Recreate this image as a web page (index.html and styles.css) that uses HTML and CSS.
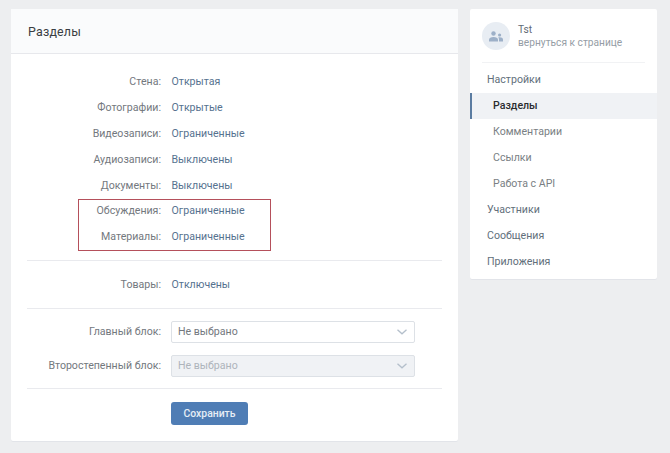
FILE: index.html
```html
<!DOCTYPE html>
<html lang="ru">
<head>
  <meta charset="UTF-8" />
  <title>Разделы</title>
  <link rel="stylesheet" href="styles.css">
</head>
<body>
  <div class="layout">
    <div class="panel main">
      <div class="panel-head">Разделы</div>
      <div class="panel-body">
        <div class="rows">
          <div class="row"><span class="label">Стена:</span><a class="value">Открытая</a></div>
          <div class="row"><span class="label">Фотографии:</span><a class="value">Открытые</a></div>
          <div class="row"><span class="label">Видеозаписи:</span><a class="value">Ограниченные</a></div>
          <div class="row"><span class="label">Аудиозаписи:</span><a class="value">Выключены</a></div>
          <div class="row"><span class="label">Документы:</span><a class="value">Выключены</a></div>
          <div class="row"><span class="label">Обсуждения:</span><a class="value">Ограниченные</a></div>
          <div class="row"><span class="label">Материалы:</span><a class="value">Ограниченные</a></div>
          <div class="highlight"></div>
        </div>
        <div class="sep"></div>
        <div class="row"><span class="label">Товары:</span><a class="value">Отключены</a></div>
        <div class="sep sep-goods"></div>
        <div class="selects">
          <div class="row-select">
            <span class="label">Главный блок:</span>
            <div class="select">Не выбрано
              <svg class="chevron" width="10" height="6" viewBox="0 0 10 6"><path d="M.5.8L5 4.800 9.500.8" fill="none" stroke="#b4bfcb" stroke-width="1.300"/></svg>
            </div>
          </div>
          <div class="row-select">
            <span class="label">Второстепенный блок:</span>
            <div class="select disabled">Не выбрано
              <svg class="chevron" width="10" height="6" viewBox="0 0 10 6"><path d="M.5.8L5 4.800 9.500.8" fill="none" stroke="#b4bfcb" stroke-width="1.300"/></svg>
            </div>
          </div>
        </div>
        <div class="sep sep-save"></div>
        <div class="actions"><button class="save-btn" type="button">Сохранить</button></div>
      </div>
    </div>
    <div class="panel side">
      <div class="owner">
        <div class="avatar">
          <svg width="14" height="11" viewBox="0 0 14 11"><circle cx="4.500" cy="2.500" r="2.200" fill="#9db0c8"/><path d="M0 10.500V8.600C0 7 2 6 4.500 6S9 7 9 8.600v1.900z" fill="#9db0c8"/><circle cx="10.600" cy="4" r="1.600" fill="#9db0c8"/><path d="M10 10.500V8.400c0-.8-.3-1.400-.8-1.800.4-.2.9-.3 1.400-.3 1.900 0 3.400.9 3.400 2.200v2z" fill="#9db0c8"/></svg>
        </div>
        <div class="owner-text">
          <div class="owner-name">Tst</div>
          <div class="owner-back">вернуться к странице</div>
        </div>
      </div>
      <div class="side-sep"></div>
      <div class="menu">
        <div class="menu-item">Настройки</div>
        <div class="menu-item sub active">Разделы</div>
        <div class="menu-item sub">Комментарии</div>
        <div class="menu-item sub">Ссылки</div>
        <div class="menu-item sub">Работа с API</div>
        <div class="menu-item">Участники</div>
        <div class="menu-item">Сообщения</div>
        <div class="menu-item">Приложения</div>
      </div>
    </div>
  </div>
</body>
</html>
```
FILE: styles.css
```css
html, body {
  height: 100%;
  margin: 0;
  font-family: Roboto, 'Liberation Sans', Arial, sans-serif;
  font-size: 10.6px;
  background: #edeef0;
  overflow: hidden;
}
.layout {
  display: flex;
  align-items: flex-start;
  gap: 12px;
  padding: 9px 0 0 11px;
}
.panel {
  background: #fff;
  border-radius: 2px;
  box-shadow: 0 1px 0 0 #e2e4e9;
}
.main {
  width: 447px;
  height: 432px;
}
.side {
  width: 187px;
  height: 270px;
}
.panel-head {
  height: 44px;
  line-height: 45px;
  padding-left: 17px;
  background: #fafbfc;
  border-bottom: 1px solid #e7e8ec;
  font-size: 12.4px;
  color: #3a3e42;
  letter-spacing: 0.2px;
}
.panel-body {
  padding: 14px 16px 0;
}
.rows {
  position: relative;
}
.row, .row-select {
  display: flex;
  align-items: center;
  margin-left: -16px;
}
.row {
  box-sizing: border-box;
  height: 25.8px;
  padding-top: 2px;
}
.label {
  width: 150px;
  margin-right: 10px;
  flex-shrink: 0;
  text-align: right;
  color: #73787e;
}
.value {
  margin-left: 0.5px;
  color: #56728f;
}
.highlight {
  position: absolute;
  left: 51px;
  top: 131px;
  width: 191px;
  height: 50px;
  border: 1px solid #b5505b;
}
.sep {
  height: 1px;
  background: #e9eaee;
  margin: 11px 0 10px;
}
.sep-goods {
  margin: 12px 0 11.5px;
}
.sep-save {
  margin: 11px 0 13px;
}
.selects {
  display: flex;
  flex-direction: column;
  gap: 12px;
}
.select {
  box-sizing: border-box;
  width: 244px;
  height: 22px;
  padding-left: 6px;
  border: 1px solid #dde1e6;
  border-radius: 2px;
  color: #73787e;
  display: flex;
  align-items: center;
  justify-content: space-between;
}
.select.disabled {
  background: #f0f2f5;
  color: #aeb4bb;
}
.chevron {
  margin-right: 7px;
  margin-top: 1px;
}
.actions {
  padding-left: 144px;
}
.save-btn {
  display: block;
  width: 77px;
  height: 23px;
  padding: 0;
  border: none;
  border-radius: 3px;
  background: #4f7db5;
  color: #e6edf5;
  font-family: inherit;
  font-size: 10.4px;
  font-weight: 500;
}
.owner {
  display: flex;
  align-items: center;
  gap: 8px;
  padding: 13px 12px 12px;
}
.avatar {
  width: 28px;
  height: 28px;
  border-radius: 50%;
  background: #e8edf3;
  display: flex;
  align-items: center;
  justify-content: center;
}
.owner-text {
  line-height: 13px;
  font-size: 10.2px;
}
.owner-name {
  color: #5f6a75;
}
.owner-back {
  color: #959da5;
}
.side-sep {
  height: 1px;
  background: #f1f2f4;
  margin: 0 12px 4px;
}
.menu-item {
  height: 26px;
  line-height: 26px;
  padding-left: 17px;
  color: #626f7b;
}
.menu-item.sub {
  padding-left: 23px;
  color: #7a7f84;
}
.menu-item.active {
  box-sizing: border-box;
  padding-left: 21px;
  border-left: 2px solid #5b7ca1;
  background: #f0f2f5;
  color: #2a2c2e;
  font-weight: 500;
}
```
